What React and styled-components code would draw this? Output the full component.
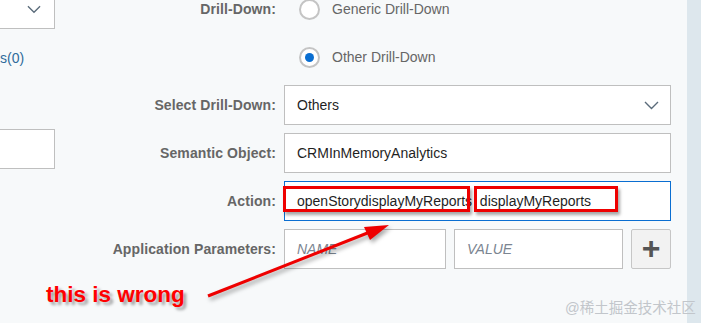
import styled, { createGlobalStyle } from "styled-components";

const GlobalStyle = createGlobalStyle`
  html, body {
    margin: 0;
    padding: 0;
    background: #f7f9fa;
  }
  body {
    font-family: "Liberation Sans", Arial, sans-serif;
    font-size: 14px;
  }
`;

const Chevron = ({ width = 15 }) => (
  <svg width={width} height="9" viewBox="0 0 15 9">
    <polyline points="1,1 7.5,7.5 14,1" fill="none" stroke="#5a6b7a" strokeWidth="1.4" />
  </svg>
);

const App = () => {
  return (
    <Page>
      <GlobalStyle />
      <LeftCol>
        <LeftSelect>
          <Chevron width={14} />
        </LeftSelect>
        <Counter>s(0)</Counter>
        <LeftInput />
      </LeftCol>

      <Form>
        <Label>Drill-Down:</Label>
        <RadioRow>
          <Radio />
          <RadioText>Generic Drill-Down</RadioText>
        </RadioRow>

        <span />
        <RadioRow>
          <Radio checked />
          <RadioText>Other Drill-Down</RadioText>
        </RadioRow>

        <Label>Select Drill-Down:</Label>
        <Field>
          <Value>Others</Value>
          <Chevron />
        </Field>

        <Label>Semantic Object:</Label>
        <Field>
          <Value>CRMInMemoryAnalytics</Value>
        </Field>

        <Label>Action:</Label>
        <Field focused>
          <Value>{"openStorydisplayMyReports\u00a0\u00a0displayMyReports"}</Value>
        </Field>

        <Label>Application Parameters:</Label>
        <ParamRow>
          <Field>
            <Placeholder>NAME</Placeholder>
          </Field>
          <Field>
            <Placeholder>VALUE</Placeholder>
          </Field>
          <AddButton>+</AddButton>
        </ParamRow>
      </Form>

      <Strip />

      <Mark style={{ left: 283, top: 186, width: 187, height: 26 }} />
      <Mark style={{ left: 474, top: 186, width: 144, height: 26 }} />
      <ArrowSvg width="701" height="323" viewBox="0 0 701 323">
        <line x1="208" y1="296" x2="370" y2="232" stroke="#ee0000" strokeWidth="3" />
        <polygon points="389,225 364,227 370,240" fill="#ee0000" />
      </ArrowSvg>
      <Note>this is wrong</Note>
      <Watermark>@稀土掘金技术社区</Watermark>
    </Page>
  );
};

export default App;

const Page = styled.div`
  position: relative;
  display: flex;
  width: 701px;
  height: 323px;
  overflow: hidden;
  background: #f7f9fa;
`;

const LeftCol = styled.div`
  width: 55px;
  flex: none;
  display: flex;
  flex-direction: column;
  margin-top: -11px;
`;

const LeftSelect = styled.div`
  height: 40px;
  box-sizing: border-box;
  border: 1px solid #bfbfbf;
  border-left: none;
  background: #fff;
  display: flex;
  align-items: center;
  justify-content: flex-end;
  padding: 0 13px 0 0;
`;

const Counter = styled.div`
  margin: 21px 0 0 0;
  color: #2f6b9a;
  font-size: 14px;
  line-height: 16px;
`;

const LeftInput = styled.div`
  margin-top: 63px;
  height: 40px;
  box-sizing: border-box;
  border: 1px solid #bfbfbf;
  border-left: none;
  background: #fff;
`;

const Form = styled.div`
  flex: 1;
  display: grid;
  grid-template-columns: 1fr 387px;
  grid-auto-rows: 40px;
  column-gap: 8px;
  row-gap: 8px;
  margin-top: -11px;
  padding-right: 16px;
  align-content: start;
`;

const Label = styled.div`
  display: flex;
  align-items: center;
  justify-content: flex-end;
  color: #666;
  font-weight: bold;
  font-size: 14px;
  letter-spacing: 0.1px;
  white-space: nowrap;
`;

const RadioRow = styled.div`
  display: flex;
  align-items: center;
  padding-left: 15px;
  gap: 12px;
`;

const Radio = styled.span`
  width: 21px;
  height: 21px;
  box-sizing: border-box;
  border-radius: 50%;
  border: 2px solid #c4c4c4;
  background: #fff;
  display: flex;
  align-items: center;
  justify-content: center;
  &::after {
    content: "";
    width: 9px;
    height: 9px;
    border-radius: 50%;
    background: ${(p) => (p.checked ? "#0a6ed1" : "transparent")};
  }
`;

const RadioText = styled.span`
  color: #666;
  font-size: 14px;
`;

const Field = styled.div`
  box-sizing: border-box;
  height: 40px;
  min-width: 0;
  border: 1px solid ${(p) => (p.focused ? "#0a6ed1" : "#bfbfbf")};
  background: #fff;
  display: flex;
  align-items: center;
  justify-content: space-between;
  padding: 0 11px 0 12px;
`;

const Value = styled.span`
  color: #1f1f1f;
  font-size: 14px;
  white-space: nowrap;
`;

const Placeholder = styled.span`
  color: #7b8591;
  font-style: italic;
  font-size: 14px;
`;

const ParamRow = styled.div`
  display: grid;
  grid-template-columns: 162px 169px 40px;
  column-gap: 7px;
  justify-content: space-between;
`;

const AddButton = styled.div`
  box-sizing: border-box;
  height: 40px;
  border: 1px solid #c6c6c6;
  border-radius: 2px;
  background: #f2f2f2;
  color: #555;
  font-size: 32px;
  font-weight: bold;
  line-height: 36px;
  text-align: center;
`;

const Strip = styled.div`
  width: 14px;
  flex: none;
  background: #dde7ed;
`;

const Mark = styled.div`
  position: absolute;
  box-sizing: border-box;
  border: 3px solid #ee0000;
  box-shadow: 2px 3px 3px rgba(0, 0, 0, 0.35);
`;

const ArrowSvg = styled.svg`
  position: absolute;
  left: 0;
  top: 0;
  pointer-events: none;
  filter: drop-shadow(2px 3px 2px rgba(0, 0, 0, 0.35));
`;

const Note = styled.div`
  position: absolute;
  left: 46px;
  top: 282px;
  color: #ff0000;
  font-weight: bold;
  font-size: 22.5px;
  text-shadow: 3px 3px 3px rgba(0, 0, 0, 0.35);
`;

const Watermark = styled.div`
  position: absolute;
  left: 565px;
  top: 296px;
  color: #c2c6cb;
  font-size: 14.5px;
  font-family: "Liberation Sans", "Noto Sans CJK SC", sans-serif;
`;
